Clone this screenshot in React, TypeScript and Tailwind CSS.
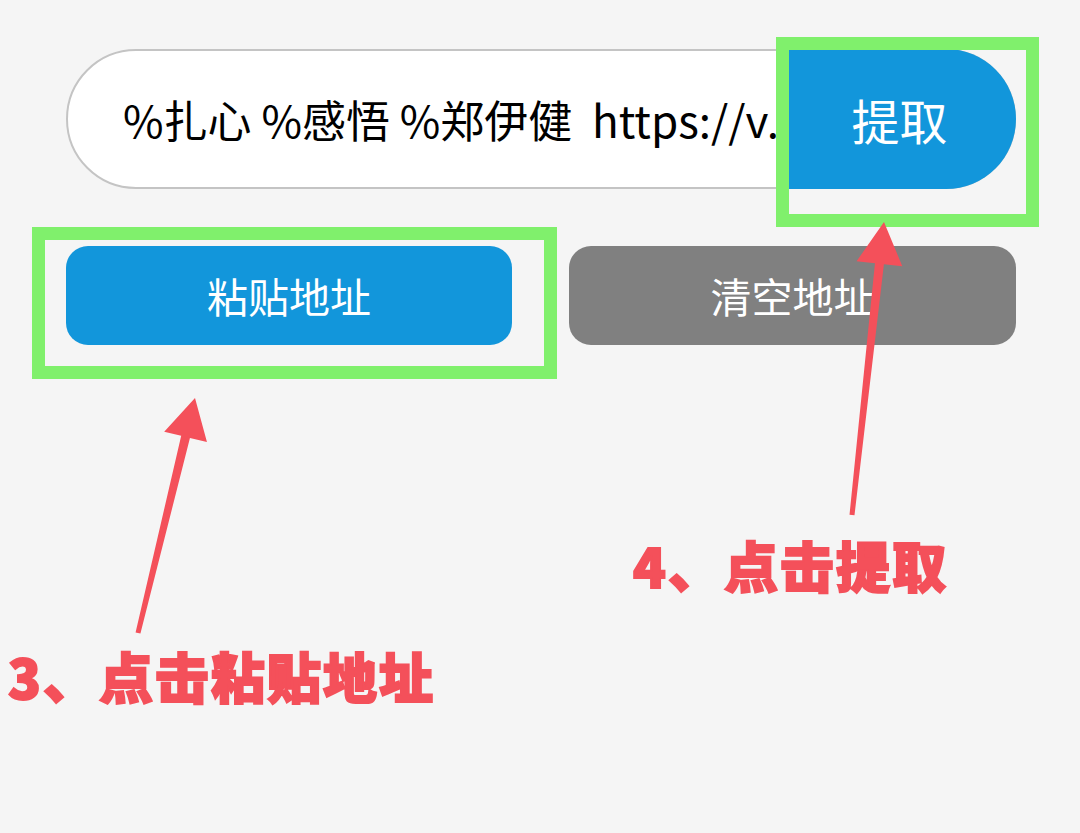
import React from 'react';

type Pt = [number, number];

// Build a tapered arrow polygon from tail to tip
const arrowPoints = (tail: Pt, tip: Pt, headLen = 40, headHalf = 22, wTop = 4.5, wTail = 2.5) => {
  const dx = tip[0] - tail[0];
  const dy = tip[1] - tail[1];
  const len = Math.hypot(dx, dy);
  const ux = dx / len;
  const uy = dy / len;
  const px = -uy;
  const py = ux;
  const bx = tip[0] - ux * headLen;
  const by = tip[1] - uy * headLen;
  const pts: Pt[] = [
    [tail[0] + px * wTail, tail[1] + py * wTail],
    [bx + px * wTop, by + py * wTop],
    [bx + px * headHalf, by + py * headHalf],
    tip,
    [bx - px * headHalf, by - py * headHalf],
    [bx - px * wTop, by - py * wTop],
    [tail[0] - px * wTail, tail[1] - py * wTail],
  ];
  return pts.map(p => p.join(',')).join(' ');
};

const App: React.FC = () => {
  return (
    <div className="relative w-[1080px] h-[833px] overflow-hidden bg-[#f5f5f5] font-['Noto_Sans_CJK_SC','Noto_Sans',sans-serif]">
      <div className="flex flex-col gap-[57px] pl-[66px] pt-[49px] w-[1016px]">
        {/* url input + extract */}
        <div className="flex h-[140px] items-stretch rounded-full border-2 border-[#c4c4c4] bg-white">
          <div className="flex-1 overflow-hidden whitespace-nowrap flex items-center pl-[55px] text-[44px] text-black">
            %扎心 %感悟 %郑伊健&nbsp;&nbsp;https://v.douyin.com
          </div>
          <button className="w-[227px] -my-[2px] -mr-[2px] rounded-r-full bg-[#1296db] text-white text-[48px] flex items-center justify-center pr-[6px]">
            提取
          </button>
        </div>

        <div className="flex gap-[57px]">
          <button className="w-[446px] h-[99px] rounded-[22px] bg-[#1296db] text-white text-[41px] flex items-center justify-center">
            粘贴地址
          </button>
          <button className="w-[447px] h-[99px] rounded-[22px] bg-[#808080] text-white text-[41px] flex items-center justify-center">
            清空地址
          </button>
        </div>
      </div>

      {/* annotation overlay */}
      <div className="absolute left-[776px] top-[37px] w-[263px] h-[190px] border-[13px] border-[#80f06c]" />
      <div className="absolute left-[32px] top-[227px] w-[525px] h-[152px] border-[13px] border-[#80f06c]" />

      <svg className="absolute left-0 top-0" width="1080" height="833" viewBox="0 0 1080 833">
        <polygon points={arrowPoints([138, 633], [195, 398])} fill="#f4505a" />
        <polygon points={arrowPoints([852, 515], [884, 222], 42, 23)} fill="#f4505a" />
      </svg>

      <div className="absolute left-[633px] top-[538px] text-[54px] leading-none font-black text-[#f4505a] tracking-[2px] [-webkit-text-stroke:2px_#f4505a]">
        4、点击提取
      </div>
      <div className="absolute left-[8px] top-[649px] text-[54px] leading-none font-black text-[#f4505a] tracking-[2px] [-webkit-text-stroke:2px_#f4505a]">
        3、点击粘贴地址
      </div>
    </div>
  );
};

export default App;
